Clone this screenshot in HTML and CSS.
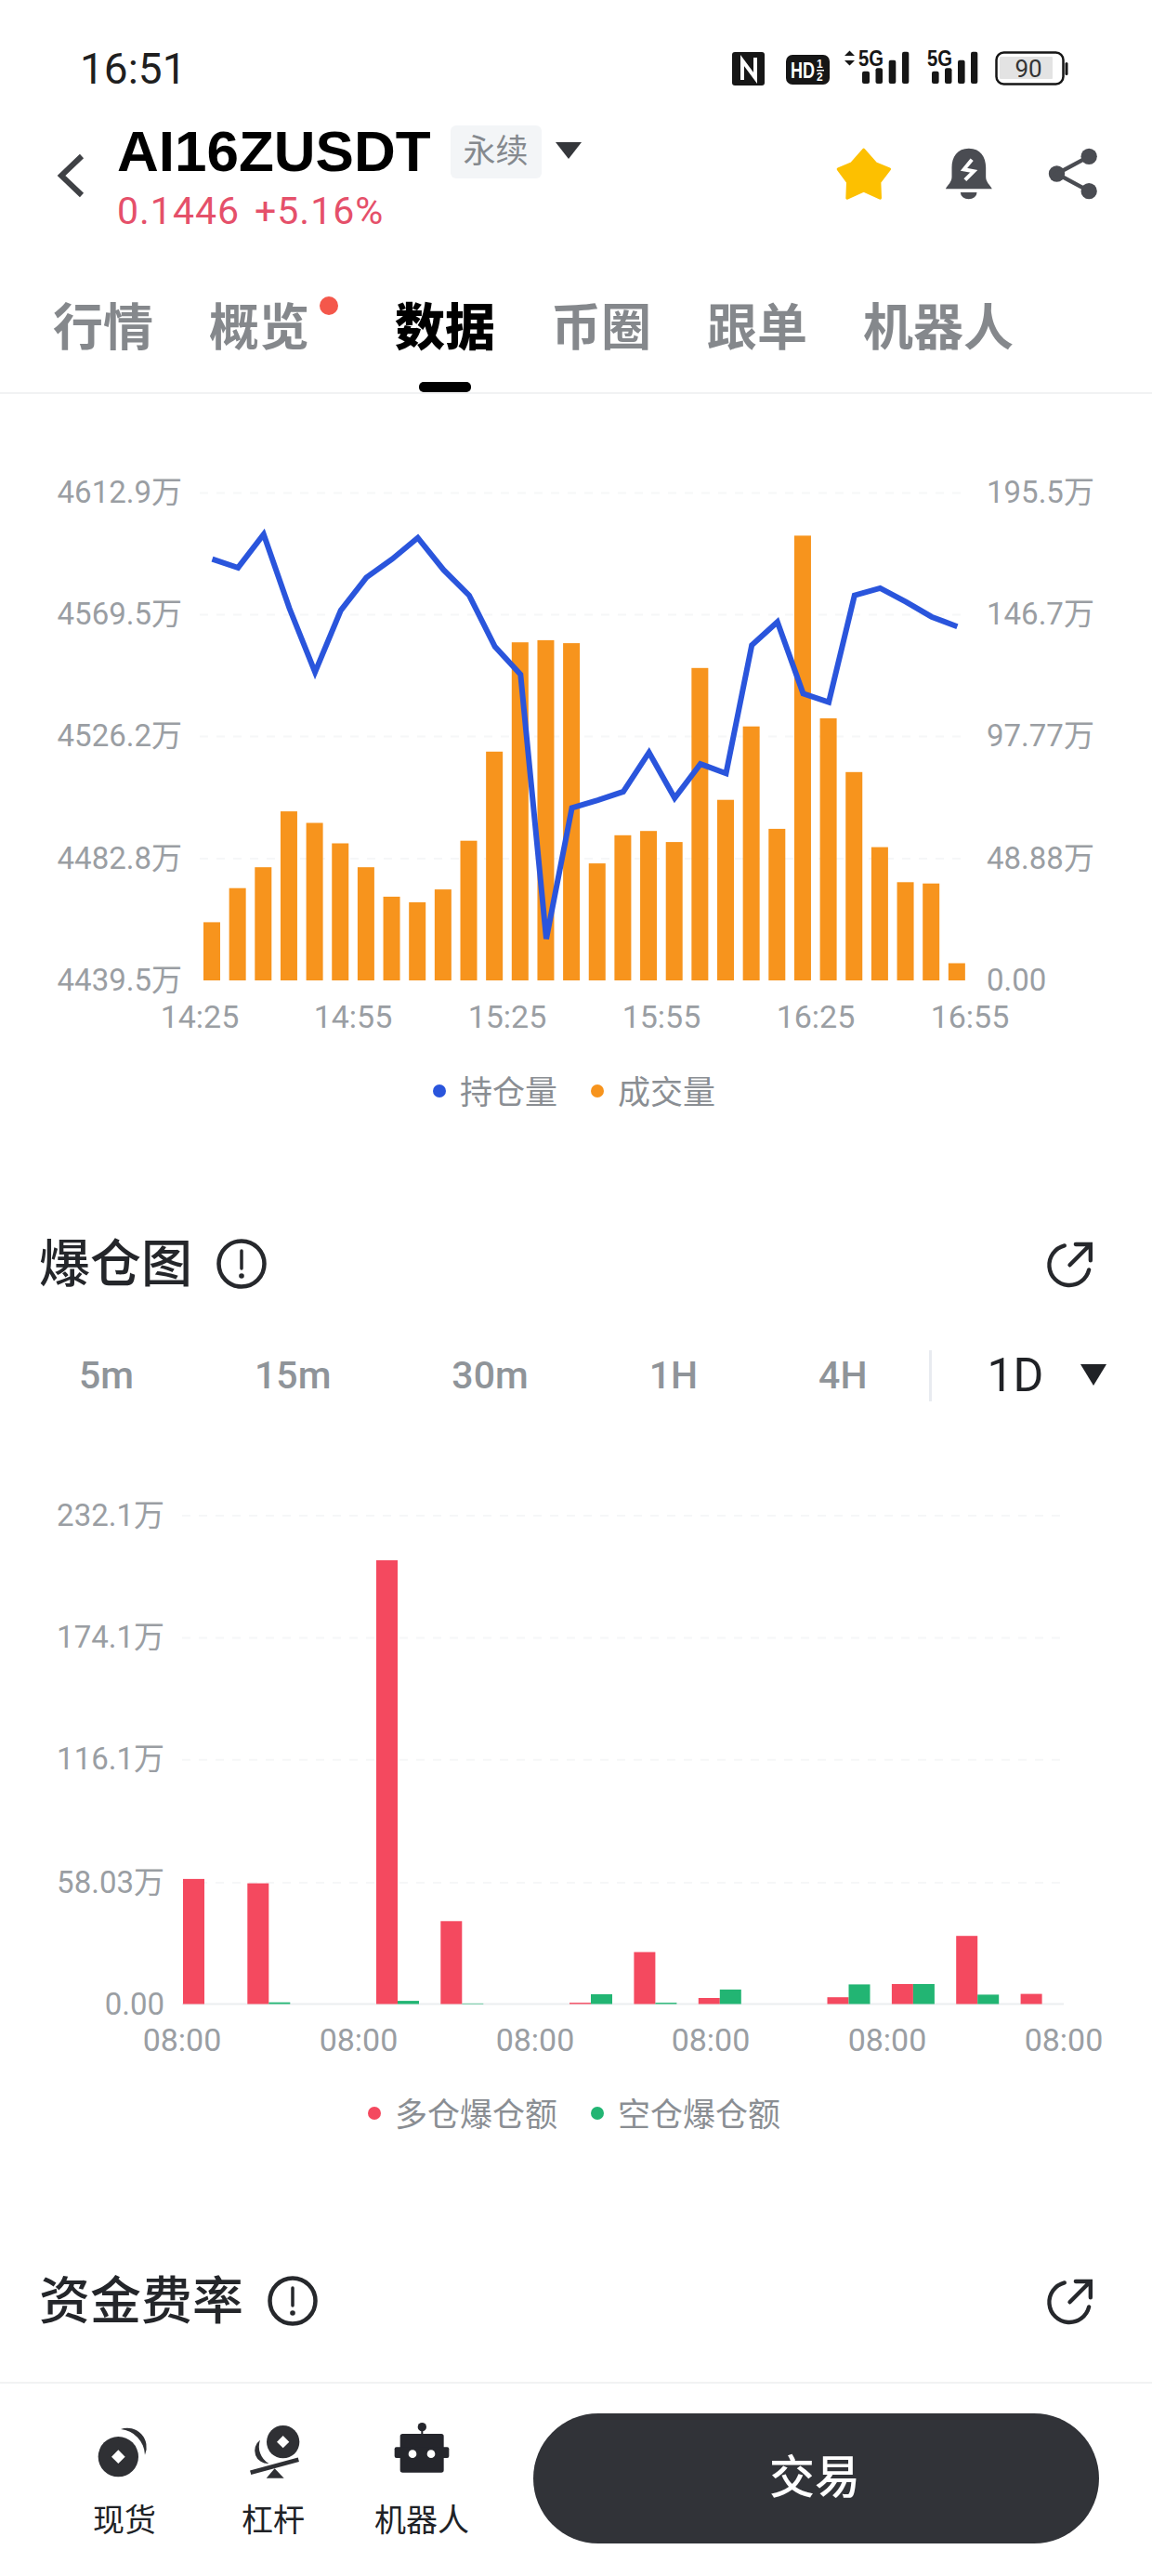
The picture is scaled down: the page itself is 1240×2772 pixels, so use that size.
FILE: index.html
```html
<!DOCTYPE html>
<html lang="zh-CN">
  <head>
    <meta charset="UTF-8" />
    <meta name="viewport" content="width=device-width, initial-scale=1.0" />
    <title>AI16ZUSDT 数据</title>
    <link rel="stylesheet" href="styles.css">
  </head>
  <body>
    <div class="page">
      <div class="status_bar">
        <span class="status_time">16:51</span>
        <svg class="status_icons" viewBox="785 50 370 50" width="370" height="50">
          <rect x="788" y="57" width="35" height="36" rx="3" fill="#161616" />
          <path d="M799 87V66L813 85V63" fill="none" stroke="#fff" stroke-width="4" />
          <rect x="846" y="60" width="47" height="32" rx="7" fill="#161616" />
          <text class="status_bold" x="851" y="85" font-size="23" textLength="26" lengthAdjust="spacingAndGlyphs" fill="#fff">HD</text>
          <text class="status_bold" x="879" y="74" font-size="12" fill="#fff">1</text>
          <rect x="879" y="76" width="8" height="1.5" fill="#fff" />
          <text class="status_bold" x="879" y="88" font-size="12" fill="#fff">2</text>
          <path d="M909 61L914.5 55.5L920 61ZM909 66H920L914.5 71.5Z" fill="#161616" />
          <text class="status_bold" x="924" y="72" font-size="23" textLength="27" lengthAdjust="spacingAndGlyphs" fill="#161616">5G</text>
          <g fill="#161616">
            <rect x="928" y="77.7" width="8" height="13.3" rx="2" />
            <rect x="942.5" y="74.3" width="7.5" height="16.7" rx="2" />
            <rect x="956.7" y="65.7" width="7.6" height="25.3" rx="2" />
            <rect x="971" y="56.7" width="7.3" height="34.3" rx="2" />
          </g>
          <text class="status_bold" x="998" y="72" font-size="23" textLength="27" lengthAdjust="spacingAndGlyphs" fill="#161616">5G</text>
          <g fill="#161616">
            <rect x="1003" y="77.7" width="7.6" height="13.3" rx="2" />
            <rect x="1017" y="74.3" width="7.5" height="16.7" rx="2" />
            <rect x="1031" y="65.7" width="7.6" height="25.3" rx="2" />
            <rect x="1045" y="56.7" width="7.3" height="34.3" rx="2" />
          </g>
          <rect x="1072.5" y="57.5" width="72" height="34" rx="8" fill="#fff" stroke="#161616" stroke-width="2.5" />
          <rect x="1076" y="62" width="57" height="24" rx="1" fill="#e3e3e3" />
          <text class="status_batt" x="1107" y="84" text-anchor="middle">90</text>
          <rect x="1146.5" y="68" width="3" height="14" rx="1.5" fill="#161616" />
        </svg>
      </div>

      <div class="header">
        <svg class="back_icon" viewBox="0 0 32 48" width="32" height="48">
          <polyline points="28,3 6,24 28,45" fill="none" stroke="#3f4145" stroke-width="6" />
        </svg>
        <div class="title_block">
          <div class="title_row">
            <span class="symbol">AI16ZUSDT</span>
            <span class="tag">永续</span>
            <span class="caret"></span>
          </div>
          <div class="price_row">
            <span>0.1446</span>
            <span>+5.16%</span>
          </div>
        </div>
        <div class="actions">
          <svg class="star_icon" viewBox="420 380 195 180" width="65" height="60">
            <polygon points="515,393 554,437 598,455 566,497 568,548 515,524 462,548 464,497 433,455 476,437" fill="#fdc000" stroke="#fdc000" stroke-width="10" stroke-linejoin="round" />
          </svg>
          <svg class="bell_icon" viewBox="775 380 155 180" width="52" height="60">
            <path d="M852 388C815 388 797 415 797 450V480C797 497 785 505 777 519H927C919 505 907 497 907 480V450C907 415 889 388 852 388Z" fill="#4a4c52" />
            <path d="M825 530H878A26.5 22 0 0 1 825 530Z" fill="#4a4c52" />
            <polyline points="862,424 836,456 868,462 840,490" fill="none" stroke="#fff" stroke-width="12" />
          </svg>
          <svg class="share_icon" viewBox="1105 380 170 180" width="57" height="60">
            <g fill="#4a4c52">
              <circle cx="1240" cy="414" r="26" />
              <circle cx="1136" cy="470" r="26" />
              <circle cx="1240" cy="526" r="26" />
            </g>
            <polyline points="1240,414 1136,470 1240,526" fill="none" stroke="#4a4c52" stroke-width="13" />
          </svg>
        </div>
      </div>

      <div class="tabs">
        <span class="tab">行情</span>
        <span class="tab tab_dot">概览</span>
        <span class="tab tab_active">数据</span>
        <span class="tab">币圈</span>
        <span class="tab">跟单</span>
        <span class="tab">机器人</span>
      </div>

      <!-- viewBox uses page coordinates so the numbers are easy to check -->
      <svg class="chart chart_top" viewBox="0 424 1240 706" width="1240" height="706">
        <g class="grid">
          <line x1="215" y1="530.5" x2="1040" y2="530.5" />
          <line x1="215" y1="661.5" x2="1040" y2="661.5" />
          <line x1="215" y1="792.5" x2="1040" y2="792.5" />
          <line x1="215" y1="924" x2="1040" y2="924" />
        </g>
        <g class="axis_text" text-anchor="end">
          <text x="196" y="541">4612.9万</text>
          <text x="196" y="672">4569.5万</text>
          <text x="196" y="803">4526.2万</text>
          <text x="196" y="935">4482.8万</text>
          <text x="196" y="1066">4439.5万</text>
        </g>
        <g class="axis_text">
          <text x="1062" y="541">195.5万</text>
          <text x="1062" y="672">146.7万</text>
          <text x="1062" y="803">97.77万</text>
          <text x="1062" y="935">48.88万</text>
          <text x="1062" y="1066">0.00</text>
        </g>
        <g class="bars_volume">
          <rect x="219" y="992.4" width="18" height="62.6" />
          <rect x="246.65" y="955.7" width="18" height="99.3" />
          <rect x="274.3" y="933.2" width="18" height="121.8" />
          <rect x="301.95" y="873.1" width="18" height="181.9" />
          <rect x="329.6" y="885.5" width="18" height="169.5" />
          <rect x="357.25" y="907.5" width="18" height="147.5" />
          <rect x="384.9" y="933.2" width="18" height="121.8" />
          <rect x="412.55" y="964.9" width="18" height="90.1" />
          <rect x="440.2" y="970.9" width="18" height="84.1" />
          <rect x="467.85" y="957.1" width="18" height="97.9" />
          <rect x="495.5" y="904.7" width="18" height="150.3" />
          <rect x="523.15" y="808.8" width="18" height="246.2" />
          <rect x="550.8" y="691.2" width="18" height="363.8" />
          <rect x="578.45" y="688.9" width="18" height="366.1" />
          <rect x="606.1" y="692.1" width="18" height="362.9" />
          <rect x="633.75" y="929.1" width="18" height="125.9" />
          <rect x="661.4" y="898.8" width="18" height="156.2" />
          <rect x="689.05" y="894.2" width="18" height="160.8" />
          <rect x="716.7" y="906.1" width="18" height="148.9" />
          <rect x="744.35" y="718.8" width="18" height="336.2" />
          <rect x="772" y="860.7" width="18" height="194.3" />
          <rect x="799.65" y="781.7" width="18" height="273.3" />
          <rect x="827.3" y="891.9" width="18" height="163.1" />
          <rect x="854.95" y="576.4" width="18" height="478.6" />
          <rect x="882.6" y="773" width="18" height="282" />
          <rect x="910.25" y="830.8" width="18" height="224.2" />
          <rect x="937.9" y="911.6" width="18" height="143.4" />
          <rect x="965.55" y="949.3" width="18" height="105.7" />
          <rect x="993.2" y="950.7" width="18" height="104.3" />
          <rect x="1020.85" y="1036.5" width="18" height="18.5" />
        </g>
        <polyline class="open_interest" points="228.5,601.7 256.2,610.9 283.8,575 311.5,654.5 339.1,723.4 366.8,656.8 394.4,621.4 422,601.7 449.7,578.7 477.4,613.2 505,640.7 532.7,695.8 560.3,725.7 588,1010.3 615.6,869.4 643.3,861.1 670.9,851.9 698.6,809.7 726.2,858.8 753.9,822.1 781.5,832.2 809.2,694.4 836.8,669.2 864.5,746.3 892.1,755.5 919.8,640.7 947.4,632.9 975.1,647.6 1002.7,663.7 1030.4,674.2" />
        <g class="axis_text axis_time" text-anchor="middle">
          <text x="215" y="1106">14:25</text>
          <text x="380" y="1106">14:55</text>
          <text x="546" y="1106">15:25</text>
          <text x="712" y="1106">15:55</text>
          <text x="878" y="1106">16:25</text>
          <text x="1044" y="1106">16:55</text>
        </g>
      </svg>
      <div class="legend">
        <span class="legend_item"><i class="dot dot_blue"></i>持仓量</span>
        <span class="legend_item"><i class="dot dot_orange"></i>成交量</span>
      </div>

      <div class="section_head section_liq">
        <span class="section_title">爆仓图</span>
        <svg class="info_icon" viewBox="0 0 54 54" width="54" height="54">
          <circle cx="27" cy="27" r="24.5" fill="none" stroke="#26282c" stroke-width="4.5" />
          <line x1="27" y1="13" x2="27" y2="32" stroke="#26282c" stroke-width="3.5" stroke-linecap="round" />
          <circle cx="27" cy="40" r="2.8" fill="#26282c" />
        </svg>
        <svg class="export_icon" viewBox="40 40 170 165" width="57" height="55">
          <path d="M108 62A65 65 0 1 0 187 140" fill="none" stroke="#26282c" stroke-width="13" stroke-linecap="round" />
          <path d="M125 125L188 62M144 58H192V110" fill="none" stroke="#26282c" stroke-width="13" stroke-linecap="round" />
        </svg>
      </div>

      <div class="intervals">
        <span class="interval">5m</span>
        <span class="interval">15m</span>
        <span class="interval">30m</span>
        <span class="interval">1H</span>
        <span class="interval">4H</span>
        <span class="interval_sep"></span>
        <span class="interval_current">1D</span>
        <span class="caret caret_dark"></span>
      </div>

      <svg class="chart chart_liq" viewBox="0 1520 1240 710" width="1240" height="710">
        <g class="grid">
          <line x1="196" y1="1631" x2="1143" y2="1631" />
          <line x1="196" y1="1762.5" x2="1143" y2="1762.5" />
          <line x1="196" y1="1893.7" x2="1143" y2="1893.7" />
          <line x1="196" y1="2026" x2="1143" y2="2026" />
        </g>
        <line class="base_line" x1="196" y1="2156.5" x2="1145" y2="2156.5" />
        <g class="axis_text" text-anchor="end">
          <text x="177" y="1642">232.1万</text>
          <text x="177" y="1773">174.1万</text>
          <text x="177" y="1904">116.1万</text>
          <text x="177" y="2037">58.03万</text>
          <text x="177" y="2168">0.00</text>
        </g>
        <g class="bars_long">
          <rect x="197" y="2021.9" width="23" height="134.6" />
          <rect x="266.3" y="2026.6" width="23" height="129.9" />
          <rect x="405" y="1679" width="23" height="477.5" />
          <rect x="474.3" y="2067.3" width="23" height="89.2" />
          <rect x="613" y="2155.1" width="23" height="1.4" />
          <rect x="682.4" y="2100.6" width="23" height="55.9" />
          <rect x="751.8" y="2150" width="23" height="6.5" />
          <rect x="890.5" y="2149.2" width="23" height="7.3" />
          <rect x="959.9" y="2135" width="23" height="21.5" />
          <rect x="1029.2" y="2083.2" width="23" height="73.3" />
          <rect x="1098.6" y="2145.6" width="23" height="10.9" />
        </g>
        <g class="bars_short">
          <rect x="289.3" y="2154.7" width="23" height="1.8" />
          <rect x="428" y="2153.1" width="23" height="3.4" />
          <rect x="497.3" y="2155.9" width="23" height="0.6" />
          <rect x="636" y="2146" width="23" height="10.5" />
          <rect x="705.4" y="2155.1" width="23" height="1.4" />
          <rect x="774.8" y="2140.9" width="23" height="15.6" />
          <rect x="913.5" y="2135.4" width="23" height="21.1" />
          <rect x="982.9" y="2135" width="23" height="21.5" />
          <rect x="1052.2" y="2146.4" width="23" height="10.1" />
        </g>
        <g class="axis_text axis_time" text-anchor="middle">
          <text x="196" y="2207">08:00</text>
          <text x="386" y="2207">08:00</text>
          <text x="576" y="2207">08:00</text>
          <text x="765" y="2207">08:00</text>
          <text x="955" y="2207">08:00</text>
          <text x="1145" y="2207">08:00</text>
        </g>
      </svg>
      <div class="legend">
        <span class="legend_item"><i class="dot dot_red"></i>多仓爆仓额</span>
        <span class="legend_item"><i class="dot dot_green"></i>空仓爆仓额</span>
      </div>

      <div class="section_head section_funding">
        <span class="section_title">资金费率</span>
        <svg class="info_icon" viewBox="0 0 54 54" width="54" height="54">
          <circle cx="27" cy="27" r="24.5" fill="none" stroke="#26282c" stroke-width="4.5" />
          <line x1="27" y1="13" x2="27" y2="32" stroke="#26282c" stroke-width="3.5" stroke-linecap="round" />
          <circle cx="27" cy="40" r="2.8" fill="#26282c" />
        </svg>
        <svg class="export_icon" viewBox="40 40 170 165" width="57" height="55">
          <path d="M108 62A65 65 0 1 0 187 140" fill="none" stroke="#26282c" stroke-width="13" stroke-linecap="round" />
          <path d="M125 125L188 62M144 58H192V110" fill="none" stroke="#26282c" stroke-width="13" stroke-linecap="round" />
        </svg>
      </div>

      <div class="footer">
        <div class="tool">
          <svg viewBox="40 30 180 186" width="60" height="62">
            <circle cx="110" cy="146" r="65" fill="#2f3034" />
            <path d="M88 146L110 124L132 146L110 168Z" fill="#fff" />
            <path d="M118 57A62 62 0 0 1 196 140A87 87 0 0 0 118 57Z" fill="#2f3034" />
          </svg>
          <span class="tool_label">现货</span>
        </div>
        <div class="tool">
          <svg viewBox="520 30 180 186" width="60" height="62">
            <circle cx="642" cy="98" r="53" fill="#2f3034" />
            <path d="M622 98L642 78L662 98L642 118Z" fill="#fff" />
            <path d="M568 92A42 42 0 0 0 596 168A64 64 0 0 1 568 92Z" fill="#2f3034" />
            <line x1="537" y1="197" x2="692" y2="155" stroke="#2f3034" stroke-width="14" />
            <path d="M615 184L645 215H588Z" fill="#2f3034" />
          </svg>
          <span class="tool_label">杠杆</span>
        </div>
        <div class="tool">
          <svg viewBox="1005 30 180 186" width="60" height="62">
            <circle cx="1096" cy="50" r="14" fill="#25262c" />
            <rect x="1093" y="55" width="6" height="22" fill="#25262c" />
            <rect x="1025" y="72" width="141" height="125" rx="8" fill="#25262c" />
            <rect x="1007" y="115" width="176" height="35" rx="6" fill="#25262c" />
            <circle cx="1065" cy="137" r="13" fill="#fff" />
            <circle cx="1125" cy="137" r="13" fill="#fff" />
          </svg>
          <span class="tool_label">机器人</span>
        </div>
        <div class="trade_button">交易</div>
      </div>
    </div>
  </body>
</html>
```

FILE: styles.css
```css
* {
  box-sizing: border-box;
}
body {
  margin: 0;
  background: #ffffff;
  font-family: Roboto, "Noto Sans CJK SC", sans-serif;
}
.page {
  width: 1240px;
  height: 2772px;
  display: flex;
  flex-direction: column;
  overflow: hidden;
}

.status_bar {
  height: 120px;
  padding: 28px 85px 0 86px;
  display: flex;
  align-items: center;
  justify-content: space-between;
}
.status_time {
  font-size: 46px;
  line-height: 50px;
  color: #1f1f1f;
}
.status_bold {
  font-family: "Liberation Sans", sans-serif;
  font-weight: 700;
}
.status_batt {
  font-size: 26px;
  fill: #333333;
}

.header {
  height: 180px;
  padding: 0 56px 0 60px;
  display: flex;
  align-items: flex-start;
}
.back_icon {
  margin-top: 45px;
  flex: none;
}
.title_block {
  margin-left: 34px;
  padding-top: 13px;
}
.title_row {
  height: 60px;
  display: flex;
  align-items: center;
}
.symbol {
  font-family: "Liberation Sans", sans-serif;
  font-weight: 700;
  font-size: 62px;
  line-height: 60px;
  color: #000000;
}
.tag {
  margin-left: 21px;
  width: 98px;
  height: 57px;
  border-radius: 6px;
  background: #f3f5f7;
  color: #85898e;
  font-size: 35px;
  line-height: 57px;
  text-align: center;
}
.caret {
  margin-left: 15px;
  margin-bottom: 2px;
  width: 0;
  height: 0;
  border-left: 14px solid transparent;
  border-right: 14px solid transparent;
  border-top: 18px solid #35373b;
}
.price_row {
  margin-top: 14px;
  display: flex;
  gap: 16px;
  font-size: 41px;
  line-height: 40px;
  letter-spacing: 1px;
  color: #e5506a;
}
.actions {
  margin-left: auto;
  margin-top: 37px;
  display: flex;
}
.bell_icon {
  margin-left: 54px;
}
.share_icon {
  margin-left: 58px;
}

.tabs {
  height: 124px;
  padding: 15px 0 0 57px;
  display: flex;
  gap: 60px;
  border-bottom: 2px solid #f1f2f3;
}
.tab {
  position: relative;
  height: 78px;
  font-size: 54px;
  line-height: 78px;
  font-weight: 700;
  color: #85888c;
}
.tab_dot {
  margin-right: 32px;
}
.tab_dot::after {
  content: "";
  position: absolute;
  left: 119px;
  top: 4px;
  width: 20px;
  height: 20px;
  border-radius: 50%;
  background: #f4574b;
}
.tab_active {
  font-weight: 900;
  color: #000000;
}
.tab_active::after {
  content: "";
  position: absolute;
  left: 26px;
  top: 96px;
  width: 56px;
  height: 11px;
  border-radius: 5px;
  background: #000000;
}

.chart {
  display: block;
  flex: none;
}
.grid line {
  stroke: #f6f7f8;
  stroke-width: 2;
  stroke-dasharray: 9 9;
}
.base_line {
  stroke: #eceef0;
  stroke-width: 2;
}
.axis_text {
  font-size: 33px;
  fill: #9a9ea3;
}
.axis_time {
  font-size: 34px;
}
.bars_volume {
  fill: #f7941d;
}
.open_interest {
  fill: none;
  stroke: #2a55dc;
  stroke-width: 6;
}
.bars_long {
  fill: #f4495f;
}
.bars_short {
  fill: #22b573;
}

.legend {
  height: 90px;
  flex: none;
  padding: 3px 4px 0 0;
  display: flex;
  justify-content: center;
  align-items: center;
  gap: 36px;
}
.legend_item {
  display: flex;
  align-items: center;
  gap: 15px;
  font-size: 35px;
  line-height: 44px;
  color: #8a8e93;
}
.dot {
  width: 14px;
  height: 14px;
  border-radius: 50%;
  margin-top: -6px;
}
.dot_blue {
  background: #2a55dc;
}
.dot_orange {
  background: #f7941d;
}
.dot_red {
  background: #f4495f;
}
.dot_green {
  background: #22b573;
}

.section_head {
  height: 80px;
  flex: none;
  padding: 0 60px 0 42px;
  display: flex;
  align-items: center;
}
.section_liq {
  margin-top: 100px;
}
.section_funding {
  margin-top: 116px;
}
.section_title {
  font-size: 55px;
  line-height: 80px;
  font-weight: 500;
  color: #24262a;
}
.info_icon {
  margin-left: 26px;
}
.export_icon {
  margin-left: auto;
}

.intervals {
  height: 80px;
  flex: none;
  margin-top: 40px;
  padding-left: 85px;
  display: flex;
  align-items: center;
  gap: 130px;
}
.interval {
  font-size: 41px;
  font-weight: 500;
  color: #8f9499;
}
.interval_sep {
  width: 3px;
  height: 55px;
  margin-left: -64px;
  background: #e8ebf0;
}
.interval_current {
  font-size: 50px;
  color: #202226;
  margin-left: -70px;
}
.caret_dark {
  margin-left: -90px;
  border-top: 23px solid #202226;
}

.footer {
  margin-top: auto;
  height: 209px;
  padding: 32px 57px 0 54px;
  display: flex;
  align-items: flex-start;
  border-top: 2px solid #f1f2f3;
}
.tool {
  width: 160px;
  padding-top: 8px;
  display: flex;
  flex-direction: column;
  align-items: center;
}
.tool_label {
  margin-top: 25px;
  font-size: 34px;
  line-height: 40px;
  color: #202226;
}
.trade_button {
  margin-left: auto;
  width: 609px;
  height: 140px;
  border-radius: 70px;
  background: #313338;
  color: #ffffff;
  font-size: 49px;
  font-weight: 500;
  line-height: 140px;
  text-align: center;
  padding-right: 3px;
}
```
